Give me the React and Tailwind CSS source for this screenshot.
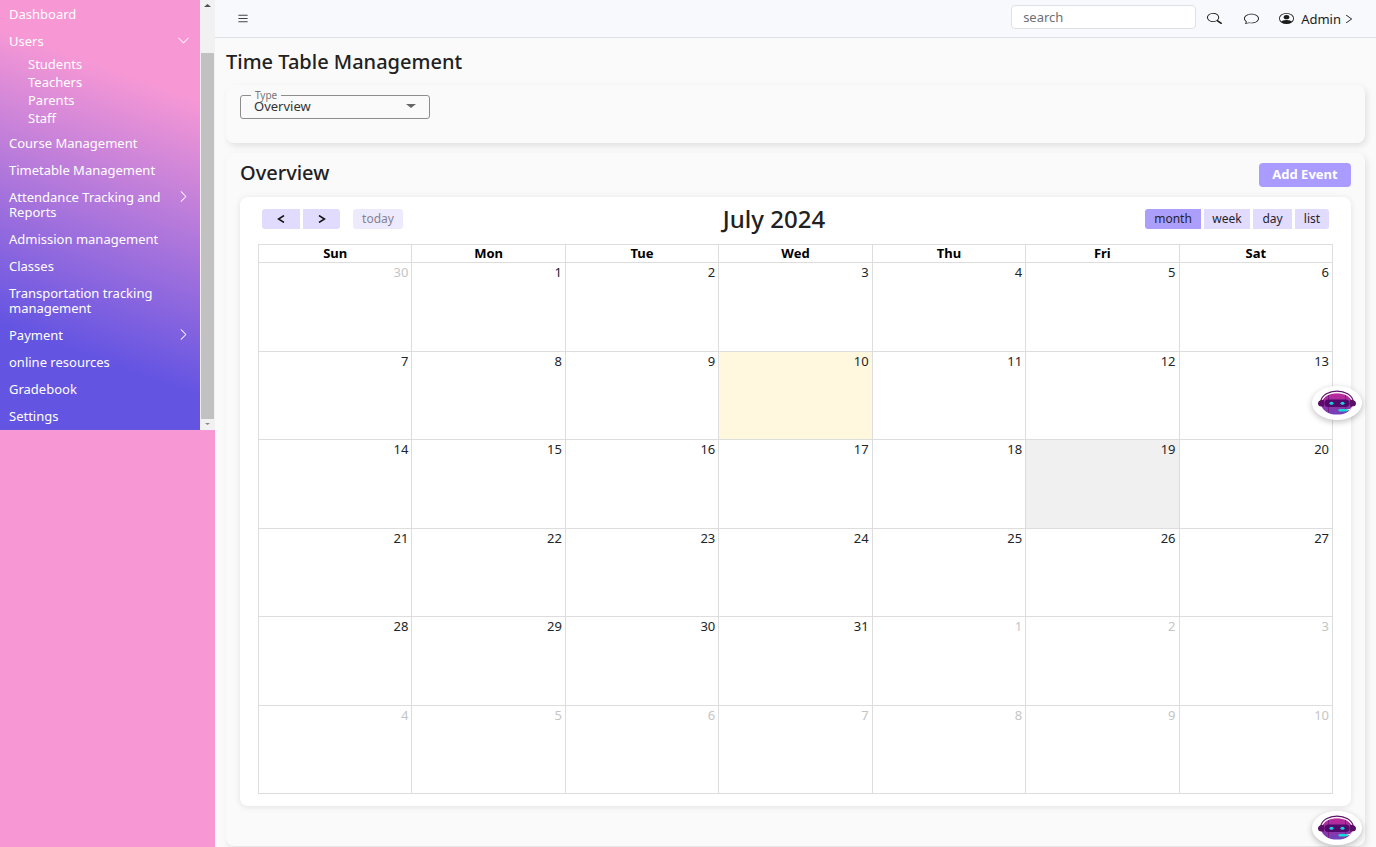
import { BsList, BsSearch, BsChat, BsPersonCircle, BsChevronRight, BsChevronDown } from "react-icons/bs";

const menu = [
  { label: "Dashboard" },
  { label: "Users", arrow: "down", children: ["Students", "Teachers", "Parents", "Staff"] },
  { label: "Course Management" },
  { label: "Timetable Management" },
  { label: "Attendance Tracking and Reports", arrow: "right" },
  { label: "Admission management" },
  { label: "Classes" },
  { label: "Transportation tracking management" },
  { label: "Payment", arrow: "right" },
  { label: "online resources" },
  { label: "Gradebook" },
  { label: "Settings" },
];

const weekdays = ["Sun", "Mon", "Tue", "Wed", "Thu", "Fri", "Sat"];

// Offsets from July 1st; day 0 is June 30th.
const weeks = Array.from({ length: 6 }, (_, w) =>
  Array.from({ length: 7 }, (_, d) => {
    const n = w * 7 + d;
    if (n === 0) return { day: 30, other: true, n };
    if (n > 31) return { day: n - 31, other: true, n };
    return { day: n, other: false, n };
  })
);

function Sidebar() {
  return (
    <aside className="w-[215px] shrink-0 bg-[#f798d5]">
      <div className="flex">
        <nav className="flex-1 bg-[linear-gradient(200deg,#f798d5_20%,#6354e2_79%)] pt-px text-[13px] leading-[15px] text-white">
          <ul>
            {menu.map((item) => (
              <li key={item.label}>
                <a href="#" className="flex items-start justify-between py-[6px] pl-[9px] pr-[10px]">
                  <span className="w-[164px]">{item.label}</span>
                  {item.arrow === "down" && <BsChevronDown className="h-[13px] w-[13px]" />}
                  {item.arrow === "right" && <BsChevronRight className="h-[13px] w-[13px]" />}
                </a>
                {item.children && (
                  <ul className="pb-[3px]">
                    {item.children.map((c) => (
                      <li key={c}>
                        <a href="#" className="block pl-7 leading-[18px]">{c}</a>
                      </li>
                    ))}
                  </ul>
                )}
              </li>
            ))}
          </ul>
        </nav>
        <div className="flex w-[15px] flex-col items-center bg-[#f1f1f1]">
          <svg viewBox="0 0 15 12" className="h-3 w-full"><path d="M4 7 L7.5 4 L11 7Z" fill="#505050" /></svg>
          <div className="mt-[41px] w-[13px] flex-1 bg-[#c1c1c1]" />
          <svg viewBox="0 0 15 11" className="h-[11px] w-full"><path d="M5 4 L7.5 6 L10 4Z" fill="#888" /></svg>
        </div>
      </div>
    </aside>
  );
}

function Header() {
  return (
    <header className="flex h-[38px] items-center justify-between border-b border-[#dfe2e6] bg-[#f8f9fc] pl-[21px] pr-5 text-[#1b1b1b]">
      <button aria-label="Toggle menu"><BsList className="h-[13px] w-[14px] text-[#444]" preserveAspectRatio="none" /></button>
      <div className="flex items-center">
        <input
          aria-label="search"
          placeholder="search"
          className="mb-1 h-6 w-[185px] rounded border border-[#dee2e6] bg-white px-[11px] text-[13px] placeholder:text-[#6d7075]"
        />
        <button aria-label="Search" className="ml-[11px]"><BsSearch className="h-[11px] w-[15px]" preserveAspectRatio="none" /></button>
        <button aria-label="Messages" className="ml-[22px]"><BsChat className="h-[11px] w-[15px]" preserveAspectRatio="none" /></button>
        <button className="ml-5 flex items-center text-[13px] leading-5">
          <BsPersonCircle className="mr-[7px] h-[11px] w-[15px]" preserveAspectRatio="none" />
          Admin
          <BsChevronRight className="ml-px h-[10px] w-[14px]" preserveAspectRatio="none" />
        </button>
      </div>
    </header>
  );
}

function Robot() {
  return (
    <svg viewBox="0 0 40 26" className="h-[26px] w-10" aria-hidden="true">
      <defs>
        <linearGradient id="face" x1="0" y1="0" x2="0" y2="1">
          <stop offset="0" stopColor="#c0289a" />
          <stop offset="0.5" stopColor="#9a2f9f" />
          <stop offset="1" stopColor="#6b45c0" />
        </linearGradient>
      </defs>
      <path d="M3.500 12C6 -2.500 34 -2.500 36.500 12" fill="none" stroke="#5a1268" strokeWidth="1.200" />
      <ellipse cx="20" cy="13.700" rx="15.800" ry="10.900" fill="url(#face)" />
      <path d="M4.800 11.500C8 0 32 0 35.200 11.500" fill="none" stroke="#fff" strokeWidth="1" />
      <path d="M11.500 5v17.500M28.500 5v17.500" stroke="#7a1b86" strokeWidth="1" />
      <rect x="7.500" y="9.500" width="25" height="7.500" rx="3.700" fill="#53086b" />
      <path d="M4.500 10Q1 10.500 1 13.500T4.500 16.500H7V10ZM35.500 10Q39 10.500 39 13.500T35.500 16.500H33V10Z" fill="#5a0e68" />
      <ellipse cx="14.500" cy="13.200" rx="2" ry="1.500" fill="#19d3dc" />
      <ellipse cx="25.500" cy="13.200" rx="2" ry="1.500" fill="#19d3dc" />
      <path d="M36 16.500Q34 20.300 29 20.300" fill="none" stroke="#fff" strokeWidth="1" />
      <rect x="21.500" y="19" width="8.500" height="2.400" rx="1.200" fill="#14dbd6" />
    </svg>
  );
}

function ChatButton({ className }) {
  return (
    <button
      aria-label="Open chat assistant"
      className={"fixed right-[14px] flex h-[34px] w-[50px] items-center justify-center rounded-[50%] bg-white shadow-[0_2px_6px_rgba(0,0,0,0.25)] " + className}
    >
      <Robot />
    </button>
  );
}

function Calendar() {
  return (
    <div className="rounded-lg bg-white px-[18px] pb-3 pt-3 shadow-[0_1px_6px_rgba(0,0,0,0.1)]">
      <div className="flex items-center justify-between px-1 text-[12px]">
        <div className="flex h-5 items-stretch">
          <button aria-label="Previous" className="flex w-[38px] items-center justify-center rounded-l-[3px] bg-[#e1dcfd]">
            <svg viewBox="0 0 8 8" className="h-2 w-2"><path d="M7 .5L1.500 4 7 7.500" fill="none" stroke="#111" strokeWidth="1.500" /></svg>
          </button>
          <button aria-label="Next" className="ml-[3px] flex w-[37px] items-center justify-center rounded-r-[3px] bg-[#e1dcfd]">
            <svg viewBox="0 0 8 8" className="h-2 w-2"><path d="M1 .5L6.500 4 1 7.500" fill="none" stroke="#111" strokeWidth="1.500" /></svg>
          </button>
          <button disabled className="ml-[13px] w-[50px] rounded-[3px] bg-[#edeafe] text-[#85828f]">today</button>
        </div>
        <h2 className="text-[24px] font-medium leading-5 text-[#212121]">July 2024</h2>
        <div className="flex h-5 items-stretch justify-end gap-[3px] text-[#25232e]">
          <button className="w-14 rounded-l-[3px] bg-[#ab9ffb]">month</button>
          <button className="w-[46px] bg-[#e1dcfd]">week</button>
          <button className="w-[39px] bg-[#e1dcfd]">day</button>
          <button className="w-[34px] rounded-r-[3px] bg-[#e1dcfd]">list</button>
        </div>
      </div>
      <table className="mt-[15px] h-[550px] w-full table-fixed border-collapse text-[13px] text-[#212529]">
        <thead>
          <tr className="h-[18px]">
            {weekdays.map((d) => (
              <th key={d} className="border border-[#dddddd] p-0 font-bold leading-[17px] text-black">{d}</th>
            ))}
          </tr>
        </thead>
        <tbody>
          {weeks.map((week, i) => (
            <tr key={i}>
              {week.map((c) => (
                <td
                  key={c.n}
                  className={
                    "border border-[#dddddd] px-[3px] pt-px text-right align-top leading-4 " +
                    (c.other ? "text-[#c4c5c6] " : "") +
                    (c.n === 10 ? "bg-[#fff8df]" : c.n === 19 ? "bg-[#f0f0f0]" : "")
                  }
                >
                  {c.day}
                </td>
              ))}
            </tr>
          ))}
        </tbody>
      </table>
    </div>
  );
}

export default function App() {
  return (
    <div className="flex min-h-screen bg-[#fafafa] font-['Noto_Sans','Open_Sans',sans-serif]">
      <Sidebar />
      <div className="min-w-0 flex-1">
        <Header />
        <main className="px-[11px] pb-px">
          <h1 className="pt-3 text-[20px] font-medium leading-6 text-[#212121]">Time Table Management</h1>
          <section className="mt-[11px] rounded-lg bg-[#fafafa] px-[14px] pb-6 pt-[10px] shadow-[2px_3px_6px_rgba(0,0,0,0.1)]">
            <div className="relative w-[190px]">
              <label htmlFor="type" className="absolute -top-[6px] left-[11px] bg-[#fafafa] px-1 text-[10px] leading-3 text-[#777]">Type</label>
              <select id="type" className="block h-6 w-full appearance-none rounded-[3px] border border-[#8d8d8d] bg-transparent pb-[3px] pl-[13px] text-[13px] leading-4 text-[#333]">
                <option>Overview</option>
              </select>
              <svg viewBox="0 0 10 4" className="pointer-events-none absolute right-[14px] top-[9px] h-1 w-[10px]"><path d="M0 0H10L5 4Z" fill="#666" /></svg>
            </div>
          </section>
          <section className="mt-[10px] rounded-lg bg-[#fafafa] px-[14px] pb-10 pt-[10px] shadow-[2px_3px_6px_rgba(0,0,0,0.1)]">
            <div className="flex items-start justify-between">
              <h2 className="text-[20px] font-medium leading-5 text-[#212121]">Overview</h2>
              <button className="h-6 w-[92px] rounded bg-[#a99bff] text-[13px] font-bold text-white">Add Event</button>
            </div>
            <div className="mt-[10px]"><Calendar /></div>
          </section>
        </main>
      </div>
      <ChatButton className="top-[386px]" />
      <ChatButton className="bottom-[2px]" />
    </div>
  );
}
